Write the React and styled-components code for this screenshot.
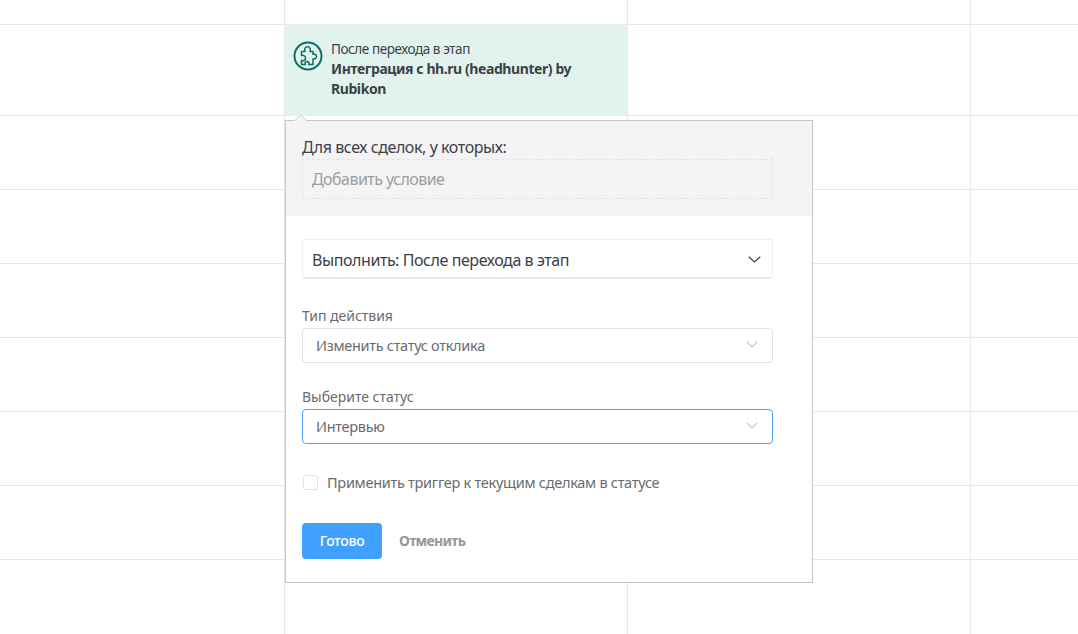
import React from "react";
import styled, { createGlobalStyle } from "styled-components";

const Global = createGlobalStyle`
  html, body { margin: 0; padding: 0; background: #fff; width: 100%; height: 100%; overflow: hidden; }
  * { box-sizing: border-box; }
  body { font-family: "Noto Sans", "Open Sans", sans-serif; color: #3a4148; }
`;

const Page = styled.div`
  position: relative;
  width: 1078px;
  height: 634px;
  overflow: hidden;
`;

const Board = styled.div`
  display: grid;
  grid-template-columns: 285px 343px 343px 107px;
  grid-template-rows: 25px 91px 74px 74px 74px 74px 74px 74px 80px;
`;

const Cell = styled.div`
  border-right: 1px solid #e8e8e8;
  border-bottom: 1px solid #e8e8e8;
  &:nth-child(4n) { border-right: none; }
`;

const TriggerCell = styled(Cell)`
  display: flex;
  align-items: flex-start;
  gap: 8px;
  padding: 15px 40px 0 8px;
  background: #e2f3ed;
  border-bottom: none;
`;

const TriggerIcon = styled.svg`
  flex: none;
  width: 30px;
  height: 30px;
  margin-top: 1px;
`;

const TriggerText = styled.div`
  flex: 1;
  font-size: 14px;
  line-height: 20px;
  letter-spacing: -0.42px;
  margin-top: -1px;
`;

const TriggerKind = styled.div`
  font-size: 13.500px;
`;

const TriggerName = styled.div`
  font-weight: 700;
`;

const Popover = styled.div`
  position: absolute;
  left: 285px;
  top: 120px;
  width: 528px;
  height: 463px;
  background: #fff;
  border: 1px solid #c5c5c5;
  display: flex;
  flex-direction: column;
`;

const Arrow = styled.div`
  position: absolute;
  left: 10px;
  top: -5px;
  width: 9px;
  height: 9px;
  background: #f4f4f4;
  border-left: 1px solid #d4d4d4;
  border-top: 1px solid #d4d4d4;
  transform: rotate(45deg);
`;

const ConditionArea = styled.div`
  height: 95px;
  flex: none;
  background: #f4f4f4;
  padding: 15px 39px 0 16px;
`;

const ConditionTitle = styled.div`
  font-size: 16px;
  line-height: 22px;
  letter-spacing: -0.42px;
`;

const AddCondition = styled.div`
  height: 40px;
  margin-top: 1px;
  padding-left: 9px;
  border: 1px dashed #e4e4e4;
  font-size: 16px;
  line-height: 39px;
  letter-spacing: -0.55px;
  color: #9a9fa3;
`;

const Body = styled.div`
  flex: 1;
  padding: 23px 39px 0 16px;
  display: flex;
  flex-direction: column;
`;

const ExecuteSelect = styled.div`
  display: flex;
  align-items: center;
  justify-content: space-between;
  height: 40px;
  padding: 2px 11px 0 9px;
  border: 1px solid #eeeeee;
  border-bottom: 2px solid #e8e8e8;
  border-radius: 3px;
  font-size: 16px;
  letter-spacing: -0.42px;
`;

const Field = styled.div`
  margin-top: ${(p) => p.$top}px;
`;

const FieldLabel = styled.div`
  font-size: 14px;
  line-height: 18px;
  letter-spacing: -0.02px;
  color: #676c70;
  margin-bottom: 4px;
  position: relative;
  top: 1px;
`;

const Select = styled.div`
  display: flex;
  align-items: center;
  justify-content: space-between;
  height: 35px;
  padding: 0 14px 2px 13px;
  border: 1px solid ${(p) => (p.$active ? "#4c9ffb" : "#dfe1e8")};
  border-radius: 4px;
  font-size: 14.500px;
  letter-spacing: -0.3px;
  color: #676c70;
`;

const Chevron = styled.svg`
  flex: none;
  width: ${(p) => p.$size}px;
  height: 7px;
  fill: none;
  stroke: ${(p) => p.$color};
  stroke-width: 1.2;
`;

const CheckRow = styled.label`
  display: flex;
  align-items: center;
  gap: 9px;
  margin-top: 28px;
  font-size: 14.500px;
  letter-spacing: -0.28px;
  color: #676c70;
`;

const CheckBox = styled.span`
  width: 15px;
  height: 15px;
  margin-left: 1px;
  border: 1px solid #dfe1e8;
  border-radius: 3px;
  background: #fff;
`;

const Actions = styled.div`
  display: flex;
  align-items: center;
  gap: 17px;
  margin-top: 31px;
`;

const Primary = styled.button`
  width: 80px;
  height: 36px;
  border: none;
  padding: 0 0 2px;
  border-radius: 4px;
  background: #40a0ff;
  color: #fff;
  font: 500 14px "Noto Sans", sans-serif;
  letter-spacing: -0.3px;
`;

const Cancel = styled.button`
  border: none;
  padding: 0 0 2px;
  background: none;
  color: #92989b;
  font: 700 14px "Noto Sans", sans-serif;
  letter-spacing: -0.7px;
`;

const Arrowhead = ({ color, size }) => (
  <Chevron $color={color} $size={size} viewBox={`0 0 ${size} 7`}>
    <path d={`M0.700 0.700L${size / 2} 6L${size - 0.7} 0.700`} />
  </Chevron>
);

export default function App() {
  return (
    <Page>
      <Global />
      <Board>
        {Array.from({ length: 5 }).map((_, i) => <Cell key={`h${i}`} />)}
        <TriggerCell>
          <TriggerIcon viewBox="0 0 30 30" fill="none" stroke="#0b6f63">
            <circle cx="15" cy="15" r="13.500" strokeWidth="2" />
            <path
              strokeWidth="1.500"
              strokeLinejoin="round"
              d="M8.500 10.500H12C11.200 9 11.700 5.800 14.500 5.800S17.800 9 17 10.500H20V13.200C21 12.500 23.500 13.200 23.500 15.500S21 18.500 20 17.800V23.500H15.800C16.500 22 15.800 20.500 14 20.500S11.700 22 12.400 23.500H8.500V19.500C10 20.300 12.500 19.500 12.500 17S10 13.800 8.500 14.600Z"
            />
          </TriggerIcon>
          <TriggerText>
            <TriggerKind>После перехода в этап</TriggerKind>
            <TriggerName>Интеграция с hh.ru (headhunter) by Rubikon</TriggerName>
          </TriggerText>
        </TriggerCell>
        {Array.from({ length: 30 }).map((_, i) => <Cell key={i} />)}
      </Board>
      <Popover>
        <Arrow />
        <ConditionArea>
          <ConditionTitle>Для всех сделок, у которых:</ConditionTitle>
          <AddCondition>Добавить условие</AddCondition>
        </ConditionArea>
        <Body>
          <ExecuteSelect>
            Выполнить: После перехода в этап
            <Arrowhead color="#3a4148" size={13} />
          </ExecuteSelect>
          <Field $top={27}>
            <FieldLabel>Тип действия</FieldLabel>
            <Select>Изменить статус отклика<Arrowhead color="#c2c4c8" size={12} /></Select>
          </Field>
          <Field $top={24}>
            <FieldLabel>Выберите статус</FieldLabel>
            <Select $active>Интервью<Arrowhead color="#c2c4c8" size={12} /></Select>
          </Field>
          <CheckRow>
            <CheckBox />
            Применить триггер к текущим сделкам в статусе
          </CheckRow>
          <Actions>
            <Primary>Готово</Primary>
            <Cancel>Отменить</Cancel>
          </Actions>
        </Body>
      </Popover>
    </Page>
  );
}
